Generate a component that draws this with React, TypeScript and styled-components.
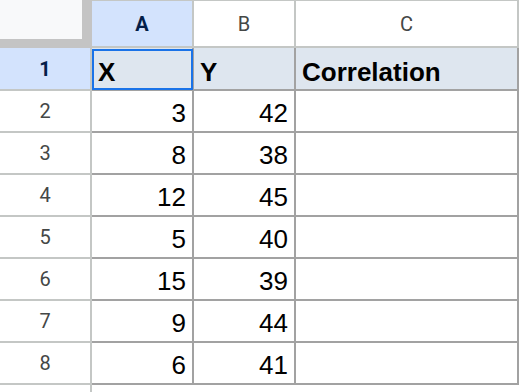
import React from "react";
import styled, { createGlobalStyle, css } from "styled-components";

const GlobalStyle = createGlobalStyle`
  html, body { margin: 0; padding: 0; background: #ffffff; }
  body { font-family: "Liberation Sans", Arial, sans-serif; }
`;

const HEADER_LINE = "#c4c7c5";
const CELL_LINE = "#a2a2a2";

const Sheet = styled.div`
  display: grid;
  grid-template-columns: 92px 102px 102px 223px;
  grid-template-rows: 48px 43px repeat(7, 42px) 10px;
  width: 522px;
  height: 392px;
  overflow: hidden;
`;

const Corner = styled.div`
  box-sizing: border-box;
  background: #c4c4c4;
  padding: 0 10px 9px 0;
  display: flex;
`;

const CornerInner = styled.div`
  flex: 1;
  background: #f8f9fa;
`;

const ColHeader = styled.div<{ $selected?: boolean }>`
  box-sizing: border-box;
  display: flex;
  align-items: center;
  justify-content: center;
  border-top: 1px solid ${HEADER_LINE};
  border-right: 2px solid ${HEADER_LINE};
  border-bottom: 2px solid ${HEADER_LINE};
  font-family: Roboto, "Liberation Sans", sans-serif;
  font-size: 20px;
  padding-top: 1px;
  color: #444746;
  background: #ffffff;
  ${(p) =>
    p.$selected &&
    css`
      background: #d3e3fd;
      color: #041e49;
      font-weight: 700;
    `}
`;

const RowHeader = styled.div<{ $selected?: boolean; $last?: boolean }>`
  box-sizing: border-box;
  display: flex;
  align-items: center;
  justify-content: center;
  border-right: 2px solid ${HEADER_LINE};
  border-bottom: ${(p) => (p.$last ? "none" : `2px solid ${HEADER_LINE}`)};
  font-family: Roboto, "Liberation Sans", sans-serif;
  font-size: 20px;
  color: #444746;
  background: #ffffff;
  ${(p) =>
    p.$selected &&
    css`
      background: #d3e3fd;
      color: #041e49;
      font-weight: 700;
    `}
`;

const Cell = styled.div<{
  $align?: "left" | "right";
  $head?: boolean;
  $active?: boolean;
  $empty?: boolean;
}>`
  box-sizing: border-box;
  position: relative;
  display: flex;
  align-items: flex-end;
  justify-content: ${(p) => (p.$align === "right" ? "flex-end" : "flex-start")};
  padding: ${(p) => (p.$head ? "0 6px 2px 6px" : "0 6px 3px 5px")};
  border-right: ${(p) => (p.$empty ? "none" : `2px solid ${CELL_LINE}`)};
  border-bottom: ${(p) => (p.$empty ? "none" : `2px solid ${CELL_LINE}`)};
  background: ${(p) => (p.$head ? "#dee6ef" : "#ffffff")};
  font-family: "Liberation Sans", Arial, sans-serif;
  font-size: 26px;
  line-height: 30px;
  font-weight: ${(p) => (p.$head ? 700 : 400)};
  color: #000000;
  white-space: nowrap;
  ${(p) =>
    p.$active &&
    css`
      &::after {
        content: "";
        position: absolute;
        left: 0;
        top: 1px;
        right: -1px;
        bottom: -1px;
        border: 2px solid #1a73e8;
        pointer-events: none;
      }
    `}
`;

const data: [number, number][] = [
  [3, 42],
  [8, 38],
  [12, 45],
  [5, 40],
  [15, 39],
  [9, 44],
  [6, 41],
];

export default function App() {
  return (
    <>
      <GlobalStyle />
      <Sheet>
        <Corner>
          <CornerInner />
        </Corner>
        <ColHeader $selected>A</ColHeader>
        <ColHeader>B</ColHeader>
        <ColHeader>C</ColHeader>

        <RowHeader $selected>1</RowHeader>
        <Cell $head $active>X</Cell>
        <Cell $head>Y</Cell>
        <Cell $head>Correlation</Cell>

        {data.map(([x, y], i) => (
          <React.Fragment key={i}>
            <RowHeader>{i + 2}</RowHeader>
            <Cell $align="right">{x}</Cell>
            <Cell $align="right">{y}</Cell>
            <Cell />
          </React.Fragment>
        ))}

        <RowHeader $last />
        <Cell $empty />
        <Cell $empty />
        <Cell $empty />
      </Sheet>
    </>
  );
}
